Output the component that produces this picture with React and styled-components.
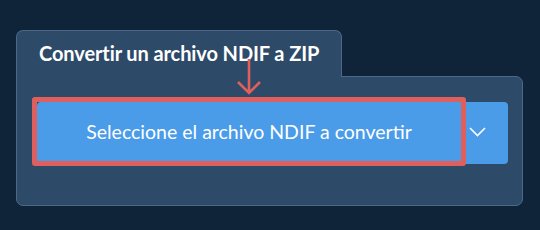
import React from 'react';
import styled, { createGlobalStyle } from 'styled-components';

const GlobalStyle = createGlobalStyle`
  *, *::before, *::after {
    box-sizing: border-box;
  }
  html, body {
    margin: 0;
    padding: 0;
    background: #0f2339;
    font-family: Lato, "Noto Sans", sans-serif;
  }
`;

const Page = styled.div`
  width: 540px;
  height: 230px;
  padding: 30px 0 0 16px;
`;

const Card = styled.div`
  position: relative;
  width: 507px;
`;

const Tab = styled.div`
  position: relative;
  z-index: 1;
  display: inline-flex;
  align-items: center;
  height: 47px;
  padding: 0 22px 2px;
  margin-bottom: -1px;
  background: #2d4a69;
  border: 1px solid #4d6988;
  border-bottom: none;
  border-radius: 7px 7px 0 0;
  color: #ffffff;
  font-size: 20px;
  font-weight: 700;
  letter-spacing: -0.1px;
`;

const Panel = styled.div`
  position: relative;
  height: 130px;
  padding: 25px 14px 0 20px;
  background: #2d4a69;
  border: 1px solid #4d6988;
  border-radius: 0 7px 7px 7px;
`;

const ButtonGroup = styled.div`
  display: flex;
  height: 62px;
`;

const MainButton = styled.button`
  position: relative;
  flex: 0 0 424px;
  border: none;
  border-radius: 4px 0 0 4px;
  background: #4a9be8;
  color: #ffffff;
  font-family: Lato, "Noto Sans", sans-serif;
  font-size: 19.5px;
  font-weight: 400;
  padding: 0 0 3px;
  cursor: pointer;
`;

const Highlight = styled.span`
  position: absolute;
  left: -5px;
  top: -5px;
  right: -5px;
  bottom: -2px;
  border: 5px solid #df5f5d;
  border-radius: 3px;
  pointer-events: none;
`;

const DropButton = styled.button`
  flex: 1;
  display: flex;
  align-items: center;
  justify-content: flex-start;
  padding: 0 0 3px 8px;
  border: none;
  border-radius: 0 4px 4px 0;
  background: #4a9be8;
  cursor: pointer;
`;

const Arrow = styled.svg`
  position: absolute;
  left: 219px;
  top: 27px;
  z-index: 2;
`;

export default function App() {
  return (
    <>
      <GlobalStyle />
      <Page>
        <Card>
          <Tab>Convertir un archivo NDIF a ZIP</Tab>
          <Panel>
            <ButtonGroup>
              <MainButton>
                Seleccione el archivo NDIF a convertir
                <Highlight />
              </MainButton>
              <DropButton>
                <svg width="17" height="10" viewBox="0 0 17 10">
                  <path d="M1 1 L8.5 8.5 L16 1" fill="none" stroke="#ffffff" strokeWidth="1.6" />
                </svg>
              </DropButton>
            </ButtonGroup>
          </Panel>
          <Arrow width="30" height="40" viewBox="0 0 30 40">
            <path d="M14 2 L14 36 M3 25 L14 36 L25 25" fill="none" stroke="#df5f5d" strokeWidth="2.6" />
          </Arrow>
        </Card>
      </Page>
    </>
  );
}
